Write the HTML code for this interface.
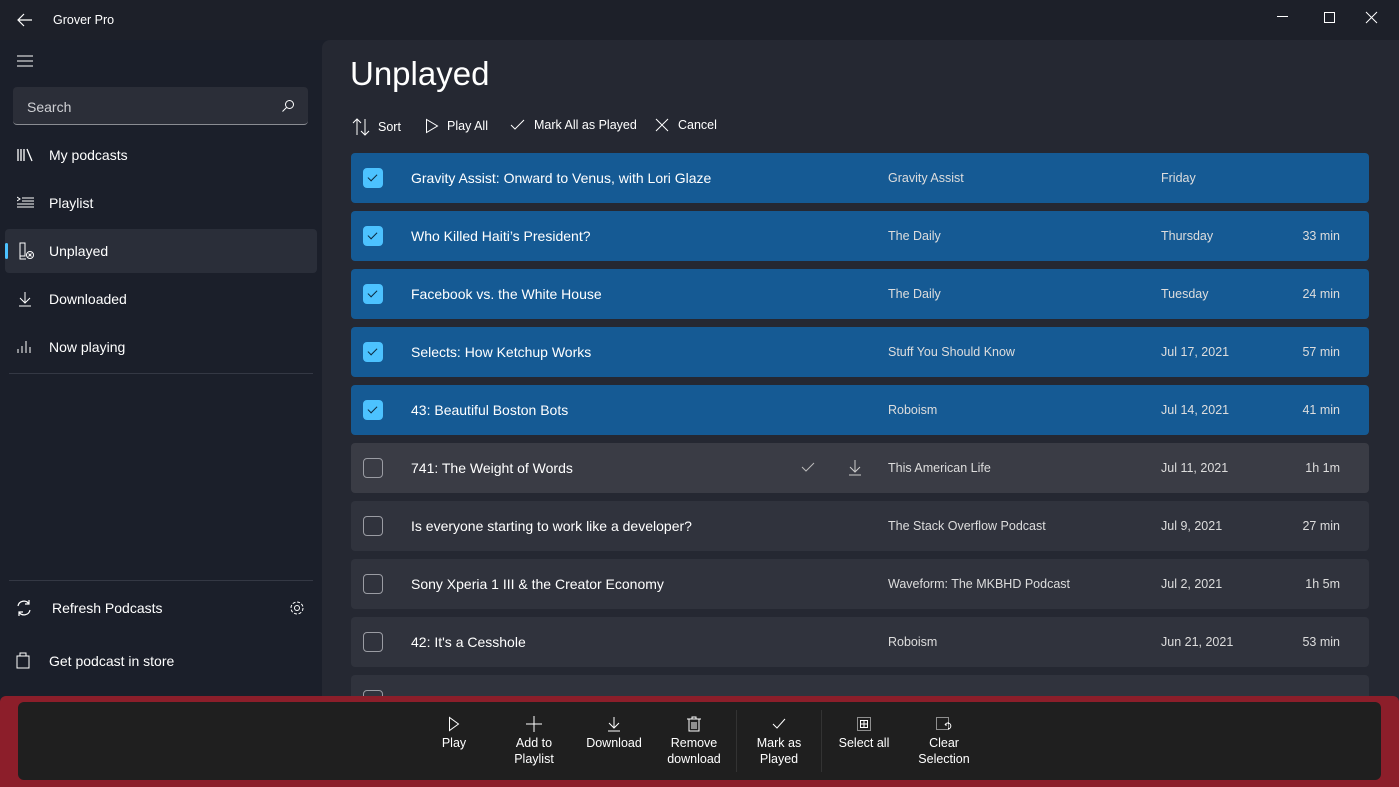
<!DOCTYPE html>
<html><head><meta charset="utf-8"><style>
*{box-sizing:border-box;margin:0;padding:0}
body{width:1399px;height:787px;overflow:hidden;background:#1b1f2a;font-family:"Liberation Sans",sans-serif;color:#fff;position:relative}
.abs{position:absolute}
.nav{position:absolute;left:5px;width:312px;height:44px;display:flex;align-items:center;font-size:14px}
.nav svg{position:absolute;left:12px}
.nav span{position:absolute;left:44px}
.panel{position:absolute;left:322px;top:40px;width:1077px;height:747px;background:#252832;border-top-left-radius:8px}
.row{position:absolute;left:351px;width:1018px;height:50px;border-radius:4px;background:#30333d;font-size:14px}
.row.sel{background:#155a94}
.row.hov{background:#3a3c45}
.cb{position:absolute;left:12px;top:15px;width:20px;height:20px;border-radius:4px;border:1px solid #9a9ca3}
.sel .cb{background:#4cc2ff;border:none}
.sel .cb::after{content:"";position:absolute;left:7px;top:4px;width:4px;height:8px;border:solid #0b2a40;border-width:0 1.5px 1.5px 0;transform:rotate(45deg)}
.t{position:absolute;left:60px;top:17px}
.p{position:absolute;left:537px;top:18px;font-size:12.5px;color:#ddd}
.d{position:absolute;left:810px;top:18px;font-size:12.5px;color:#ddd}
.m{position:absolute;right:29px;top:18px;font-size:12.5px;color:#ddd}
.tb{position:absolute;top:118px;font-size:12.5px;display:flex;align-items:center}
.bb{position:absolute;top:716px;width:80px;text-align:center;font-size:12.5px;line-height:16px}
.bb svg{display:block;margin:0 auto 3px}
</style></head><body>
<div class="abs" style="left:0;top:0;width:1399px;height:40px;background:#1d2029"></div>
<svg class="abs" style="left:17px;top:13px" width="16" height="14" viewBox="0 0 16 14"><path d="M15 7H2M7 1L1 7l6 6" stroke="#fff" fill="none" stroke-width="1.2"/></svg>
<div class="abs" style="left:53px;top:13px;font-size:12.5px">Grover Pro</div>
<svg class="abs" style="left:1275px;top:10px" width="110" height="16"><path d="M2 6.5h11" stroke="#fff"/><rect x="49.5" y="2.5" width="10" height="10" stroke="#fff" fill="none"/><path d="M91 2l11 11M102 2L91 13" stroke="#fff"/></svg>
<svg class="abs" style="left:17px;top:55px" width="16" height="12"><path d="M0 1h16M0 6h16M0 11h16" stroke="#fff"/></svg>
<div class="abs" style="left:13px;top:87px;width:295px;height:38px;background:#2b2e38;border-radius:4px;border-bottom:1px solid #8a8c92"></div>
<div class="abs" style="left:27px;top:99px;font-size:14px;color:#cfd0d4">Search</div>
<svg class="abs" style="left:281px;top:99px" width="14" height="14"><circle cx="8.5" cy="5.5" r="4" stroke="#fff" fill="none"/><path d="M5.5 8.5L1.5 12.5" stroke="#fff"/></svg>
<div class="nav" style="top:133px"><svg width="18" height="14"><path d="M1 1v12M4 1v12M7 1v12M10 1l5 12" stroke="#fff" stroke-width="1.3" fill="none"/></svg><span>My podcasts</span></div>
<div class="nav" style="top:181px"><svg width="18" height="14"><path d="M5 2h12M5 5h12M0 8h17M0 11h17M0 1l3 2-3 2" stroke="#fff" fill="none"/></svg><span>Playlist</span></div>
<div class="nav" style="top:229px;background:#2a2e39;border-radius:4px"><div class="abs" style="left:0;top:14px;width:3px;height:16px;background:#4cc2ff;border-radius:2px"></div><svg width="18" height="18"><path d="M3 1h5v13H3zM3 14v3h6" stroke="#fff" fill="none"/><circle cx="13" cy="13" r="3.5" stroke="#fff" fill="none"/><path d="M11.5 11.5l3 3M14.5 11.5l-3 3" stroke="#fff"/></svg><span>Unplayed</span></div>
<div class="nav" style="top:277px"><svg width="16" height="16"><path d="M8 1v11M3 7l5 5 5-5M2 15h12" stroke="#fff" fill="none"/></svg><span>Downloaded</span></div>
<div class="nav" style="top:325px"><svg width="16" height="14"><path d="M1 9v4M5 6v7M9 1v12M13 7v6" stroke="#fff" fill="none"/></svg><span>Now playing</span></div>
<div class="abs" style="left:9px;top:373px;width:304px;height:1px;background:#343844"></div>
<div class="abs" style="left:9px;top:580px;width:304px;height:1px;background:#343844"></div>
<svg class="abs" style="left:15px;top:599px" width="18" height="18"><path d="M3 7a6 6 0 0 1 11-2M15 11a6 6 0 0 1-11 2M14 1v4h-4M4 17v-4h4" stroke="#fff" fill="none" stroke-width="1.2"/></svg>
<div class="abs" style="left:52px;top:600px;font-size:14px">Refresh Podcasts</div>
<svg class="abs" style="left:289px;top:600px" width="16" height="16"><circle cx="8" cy="8" r="2.5" stroke="#fff" fill="none"/><circle cx="8" cy="8" r="6" stroke="#fff" fill="none" stroke-dasharray="3 1.7"/></svg>
<svg class="abs" style="left:16px;top:651px" width="14" height="18"><path d="M1 5h12v12H1zM4 5V2h6v3" stroke="#fff" fill="none"/></svg>
<div class="abs" style="left:49px;top:653px;font-size:14px">Get podcast in store</div>

<div class="panel"></div>
<div class="abs" style="left:350px;top:55px;font-size:33px;font-weight:300">Unplayed</div>
<div class="tb" style="left:352px"><svg width="18" height="18" style="margin-right:8px"><path d="M5 17V1M1 5l4-4 4 4M13 1v16M9 13l4 4 4-4" stroke="#fff" fill="none"/></svg>Sort</div>
<div class="tb" style="left:425px"><svg width="14" height="16" style="margin-right:8px"><path d="M1.5 1.5v13l11-6.5z" stroke="#fff" fill="none"/></svg>Play All</div>
<div class="tb" style="left:510px"><svg width="16" height="14" style="margin-right:8px"><path d="M1 7l4 4 9-9" stroke="#fff" fill="none"/></svg>Mark All as Played</div>
<div class="tb" style="left:655px"><svg width="14" height="14" style="margin-right:9px"><path d="M1 1l12 12M13 1L1 13" stroke="#fff" fill="none"/></svg>Cancel</div>

<div class="row sel" style="top:153px"><div class="cb"></div><div class="t">Gravity Assist: Onward to Venus, with Lori Glaze</div><div class="p">Gravity Assist</div><div class="d">Friday</div></div>
<div class="row sel" style="top:211px"><div class="cb"></div><div class="t">Who Killed Haiti’s President?</div><div class="p">The Daily</div><div class="d">Thursday</div><div class="m">33 min</div></div>
<div class="row sel" style="top:269px"><div class="cb"></div><div class="t">Facebook vs. the White House</div><div class="p">The Daily</div><div class="d">Tuesday</div><div class="m">24 min</div></div>
<div class="row sel" style="top:327px"><div class="cb"></div><div class="t">Selects: How Ketchup Works</div><div class="p">Stuff You Should Know</div><div class="d">Jul 17, 2021</div><div class="m">57 min</div></div>
<div class="row sel" style="top:385px"><div class="cb"></div><div class="t">43: Beautiful Boston Bots</div><div class="p">Roboism</div><div class="d">Jul 14, 2021</div><div class="m">41 min</div></div>
<div class="row hov" style="top:443px"><div class="cb"></div><div class="t">741: The Weight of Words</div><svg class="abs" style="left:450px;top:19px" width="14" height="11"><path d="M1 5l4 4 8-8" stroke="#bbb" fill="none"/></svg><svg class="abs" style="left:498px;top:16px" width="12" height="17"><path d="M6 1v12M1 8l5 5 5-5M0 16h12" stroke="#ccc" fill="none"/></svg><div class="p">This American Life</div><div class="d">Jul 11, 2021</div><div class="m">1h 1m</div></div>
<div class="row" style="top:501px"><div class="cb"></div><div class="t">Is everyone starting to work like a developer?</div><div class="p">The Stack Overflow Podcast</div><div class="d">Jul 9, 2021</div><div class="m">27 min</div></div>
<div class="row" style="top:559px"><div class="cb"></div><div class="t">Sony Xperia 1 III &amp; the Creator Economy</div><div class="p">Waveform: The MKBHD Podcast</div><div class="d">Jul 2, 2021</div><div class="m">1h 5m</div></div>
<div class="row" style="top:617px"><div class="cb"></div><div class="t">42: It's a Cesshole</div><div class="p">Roboism</div><div class="d">Jun 21, 2021</div><div class="m">53 min</div></div>
<div class="row" style="top:675px"><div class="cb"></div></div>

<div class="abs" style="left:0;top:696px;width:1399px;height:91px;background:#8c1e2a;border-radius:6px 6px 0 0"></div>
<div class="abs" style="left:18px;top:702px;width:1363px;height:78px;background:#1f1f1f;border-radius:6px"></div>
<div class="abs" style="left:736px;top:710px;width:1px;height:62px;background:#333"></div>
<div class="abs" style="left:821px;top:710px;width:1px;height:62px;background:#333"></div>
<div class="bb" style="left:414px"><svg width="12" height="16"><path d="M1.5 1.5v13l9-6.5z" stroke="#fff" fill="none"/></svg>Play</div>
<div class="bb" style="left:494px"><svg width="16" height="16"><path d="M8 0v16M0 8h16" stroke="#fff"/></svg>Add to<br>Playlist</div>
<div class="bb" style="left:574px"><svg width="12" height="16"><path d="M6 1v11M1 7l5 5 5-5M0 15h12" stroke="#fff" fill="none"/></svg>Download</div>
<div class="bb" style="left:654px"><svg width="14" height="16"><path d="M0 3h14M5 3V1h4v2M2 3v12h10V3M5 6v7M7 6v7M9 6v7" stroke="#fff" fill="none"/></svg>Remove<br>download</div>
<div class="bb" style="left:739px"><svg width="14" height="16"><path d="M1 8l4 4 8-9" stroke="#fff" fill="none"/></svg>Mark as<br>Played</div>
<div class="bb" style="left:824px"><svg width="14" height="16"><rect x="0.5" y="1.5" width="13" height="13" stroke="#fff" fill="none" stroke-dasharray="1 1"/><rect x="3.5" y="4.5" width="7" height="7" stroke="#fff" fill="none"/><path d="M7 4v8M3 8h8" stroke="#fff"/></svg>Select all</div>
<div class="bb" style="left:904px"><svg width="16" height="16"><rect x="0.5" y="1.5" width="12" height="12" stroke="#fff" fill="none" stroke-dasharray="1 1"/><path d="M9 9a3 3 0 1 1 3 4M9 9l2 0" stroke="#fff" fill="none"/></svg>Clear<br>Selection</div>
</body></html>
